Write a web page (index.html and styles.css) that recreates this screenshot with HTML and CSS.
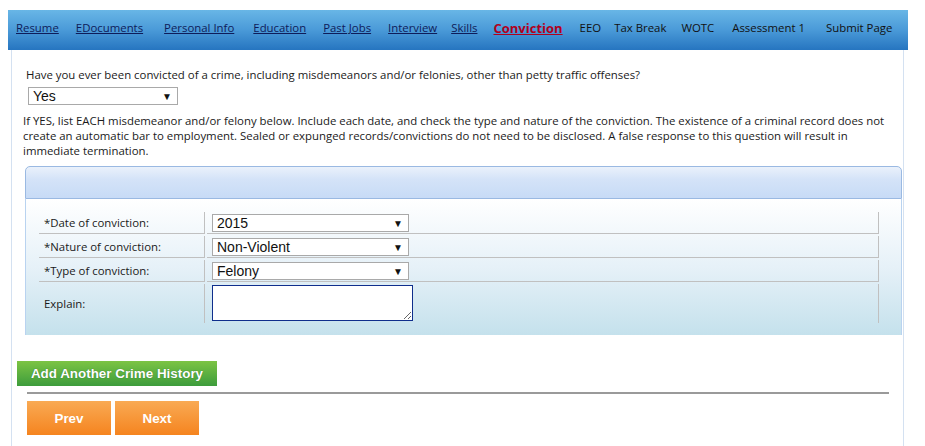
FILE: index.html
```html
<!DOCTYPE html>
<html lang="en">
<head>
    <meta charset="UTF-8">
    <title>Application - Conviction</title>
    <link rel="stylesheet" href="styles.css">
</head>
<body>
    <div class="page">
        <nav class="steps">
            <a href="#">Resume</a>
            <a href="#">EDocuments</a>
            <a href="#">Personal Info</a>
            <a href="#">Education</a>
            <a href="#">Past Jobs</a>
            <a href="#">Interview</a>
            <a href="#">Skills</a>
            <a href="#" class="current">Conviction</a>
            <span>EEO</span>
            <span>Tax Break</span>
            <span>WOTC</span>
            <span>Assessment 1</span>
            <span>Submit Page</span>
        </nav>

        <div class="frame">
            <p class="question">Have you ever been convicted of a crime, including misdemeanors and/or felonies, other than petty traffic offenses?</p>
            <div class="select yes-select">
                <select class="field">
                    <option>Yes</option>
                    <option>No</option>
                </select>
            </div>
            <p class="notice">If YES, list EACH misdemeanor and/or felony below. Include each date, and check the type and nature of the conviction. The existence of a criminal record does not create an automatic bar to employment. Sealed or expunged records/convictions do not need to be disclosed. A false response to this question will result in immediate termination.</p>

            <div class="panel">
                <div class="panel-head"></div>
                <div class="panel-body">
                    <table class="crime">
                        <tr>
                            <td class="label">*Date of conviction:</td>
                            <td><div class="select"><select class="field"><option>2015</option></select></div></td>
                        </tr>
                        <tr>
                            <td class="label">*Nature of conviction:</td>
                            <td><div class="select"><select class="field"><option>Non-Violent</option></select></div></td>
                        </tr>
                        <tr>
                            <td class="label">*Type of conviction:</td>
                            <td><div class="select"><select class="field"><option>Felony</option></select></div></td>
                        </tr>
                        <tr class="last">
                            <td class="label">Explain:</td>
                            <td><textarea class="explain"></textarea></td>
                        </tr>
                    </table>
                </div>
            </div>

            <button class="btn-add">Add Another Crime History</button>
            <div class="rule"></div>
            <div class="pager">
                <button class="btn-nav">Prev</button>
                <button class="btn-nav">Next</button>
            </div>
        </div>
    </div>
</body>
</html>
```

FILE: styles.css
```css
body {
    margin: 0;
    background: #fff;
    font-family: "Open Sans", "Noto Sans", Arial, sans-serif;
    font-size: 11.4px;
    color: #1a1a1a;
}
.page {
    width: 900px;
    padding: 10px 0 0 8px;
}

/* step bar */
.steps {
    display: flex;
    align-items: center;
    gap: 17px;
    height: 35px;
    padding: 0 0 5px 8px;
    white-space: nowrap;
    background: linear-gradient(#68b6e6, #4a9ad8 50%, #2675c0);
    font-size: 11.4px;
}
.steps a {
    color: #0e1c5a;
    text-decoration: underline;
}
.steps span {
    color: #111;
}
.steps .current {
    color: #b0001c;
    font-weight: bold;
    font-size: 13px;
}
.steps > :nth-child(3) { margin-left: 4px; }
.steps > :nth-child(4) { margin-left: 2px; }
.steps > :nth-child(7) { margin-left: -3px; }
.steps > :nth-child(8) { margin-left: -1px; }
.steps > :nth-child(10) { margin-left: -4px; }
.steps > :nth-child(11) { margin-left: -2px; }
.steps > :nth-child(12) { margin-left: 1px; }
.steps > :nth-child(13) { margin-left: 4px; }

.frame {
    margin: 0 4px 0 3px;
    height: 396px;
    border-left: 1px solid #d4e1f1;
    border-right: 1px solid #d4e1f1;
    padding: 0 0 0 14px;
}
.question {
    margin: 0;
    padding-top: 17px;
    line-height: 16px;
}
.select {
    position: relative;
    width: 197px;
    height: 18px;
}
.select::after {
    content: "\25BC";
    position: absolute;
    right: 6px;
    top: 3px;
    font-size: 10px;
    line-height: 12px;
    color: #111;
    pointer-events: none;
}
.field {
    appearance: none;
    -webkit-appearance: none;
    font-family: Arial, "Liberation Sans", sans-serif;
    font-size: 14px;
    height: 18px;
    width: 100%;
    border: 1px solid #a9a9a9;
    border-radius: 0;
    background: #fff;
    color: #111;
    padding: 0 4px;
    margin: 0;
    display: block;
}
.yes-select {
    width: 150px;
    margin: 4px 0 0 2px;
}
.notice {
    margin: 8px 0 0 -3px;
    line-height: 15px;
    width: 872px;
}

/* crime history panel */
.panel {
    margin: 8px 0 0 -1px;
    width: 877px;
}
.panel-head {
    height: 31px;
    border: 1px solid #9ab9e2;
    border-radius: 5px 5px 0 0;
    background: linear-gradient(#eaf1fb, #d4e3f8 40%, #c7dbf6);
}
.panel-body {
    height: 125px;
    padding: 11px 0 0 11px;
    border-left: 1px solid #b9d3f0;
    border-right: 1px solid #b9d3f0;
    background: linear-gradient(#fff, #e6f1f8 50%, #c4e1ec);
}
.crime {
    border-collapse: separate;
    border-spacing: 2px;
    width: 844px;
}
.crime td {
    border-right: 1px solid #c0c0c0;
    border-bottom: 1px solid #c0c0c0;
    padding: 1px 4px 1px 5px;
    height: 19px;
}
.crime td.label {
    width: 156px;
}
.crime tr.last td {
    border-bottom: none;
    height: 38px;
    padding-top: 0;
}
.explain {
    width: 201px;
    height: 36px;
    box-sizing: border-box;
    border: 1px solid #0f2e8c;
    resize: vertical;
    margin: 0;
    display: block;
}

/* buttons */
.btn-add {
    display: block;
    margin: 26px 0 0 -9px;
    width: 200px;
    height: 25px;
    border: none;
    background: linear-gradient(#7cc444, #3d9c3c);
    color: #fff;
    font-family: Arial, "Liberation Sans", sans-serif;
    font-weight: bold;
    font-size: 13.4px;
    text-shadow: 0 0 1px #2a6a2a;
    cursor: pointer;
}
.rule {
    margin: 6px 0 0 1px;
    width: 862px;
    border-top: 2px solid #9a9a9a;
}
.pager {
    display: flex;
    gap: 4px;
    margin: 7px 0 0 1px;
}
.btn-nav {
    width: 84px;
    height: 34px;
    border: none;
    background: linear-gradient(#f9aa54, #f5841f);
    color: #fff;
    font-family: Arial, "Liberation Sans", sans-serif;
    font-weight: bold;
    font-size: 13.4px;
    cursor: pointer;
}
```
